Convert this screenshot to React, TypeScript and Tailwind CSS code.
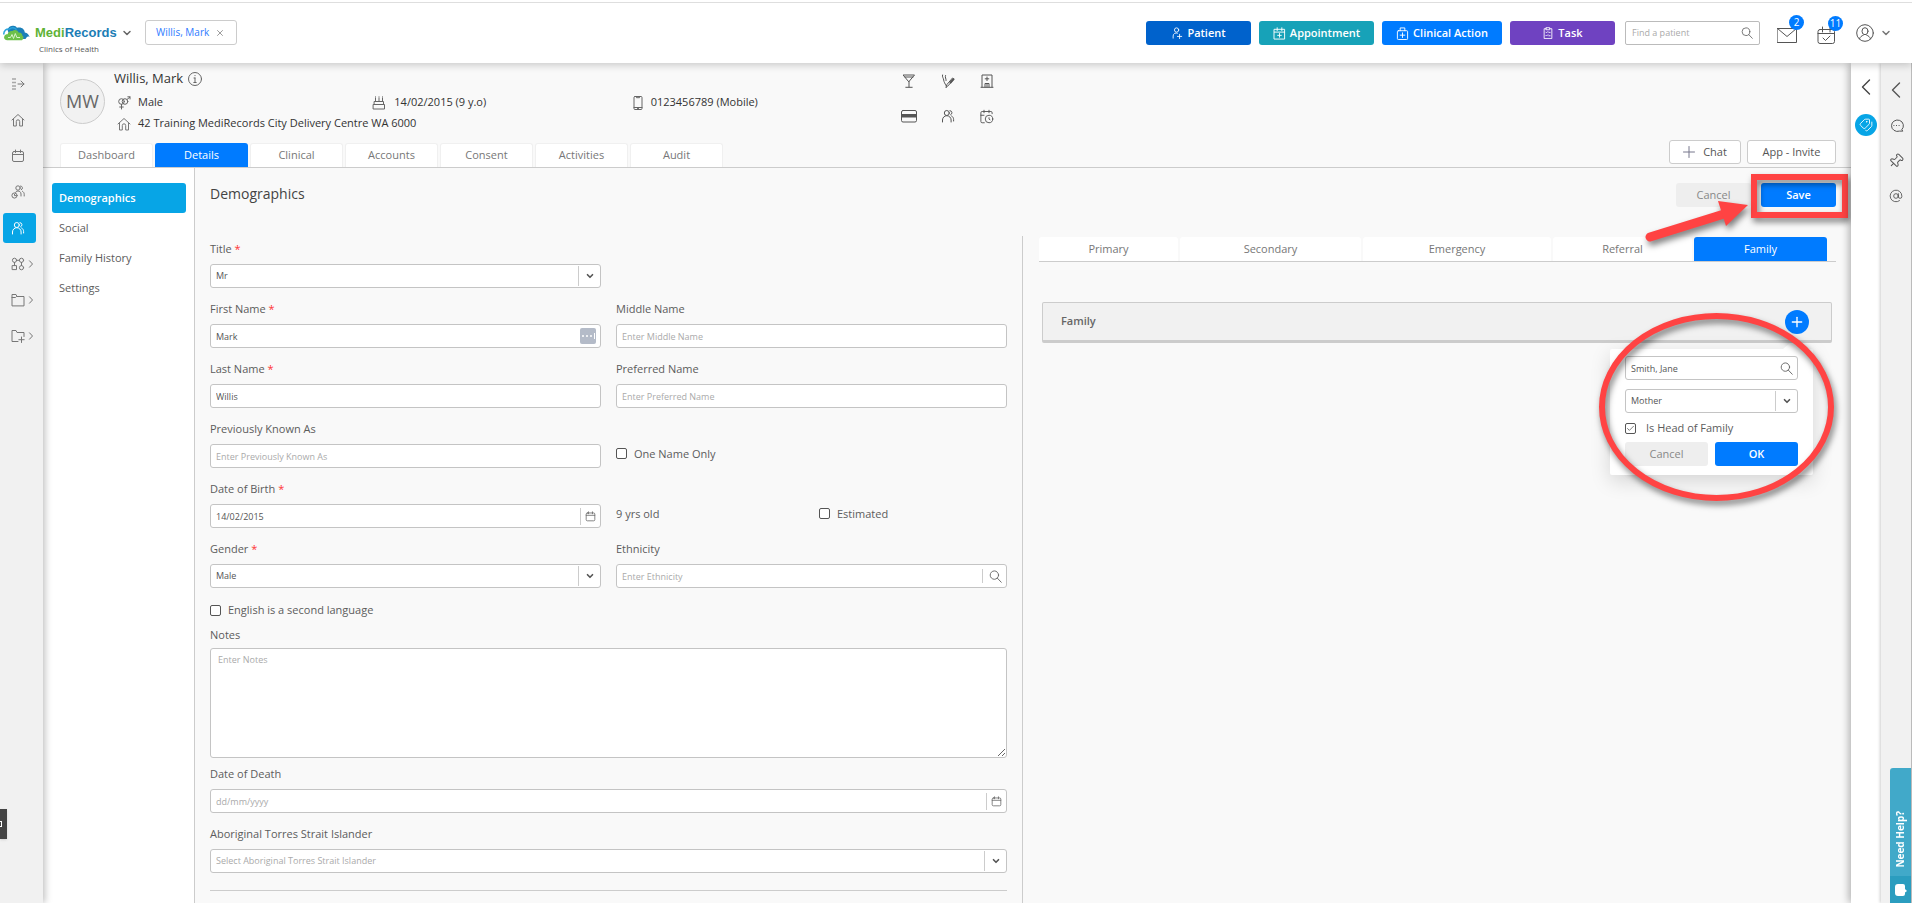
import React from "react";
import { AtSign, CalendarClock, ChevronDown, Check, Pin, Plus, Tags, X } from "lucide-react";

const Icon = ({ size = 14, box = 14, className = "", sw = 1, children }: any) => (
  <svg
    width={size}
    height={size}
    viewBox={`0 0 ${box} ${box}`}
    fill="none"
    stroke="currentColor"
    strokeWidth={sw}
    strokeLinecap="round"
    strokeLinejoin="round"
    className={`shrink-0 ${className}`}
    aria-hidden="true"
  >
    {children}
  </svg>
);

const HomeIcon = (props: any) => (
  <Icon {...props}>
    <path d="M1 7 7 1.5 13 7M2.5 6v7h2.8V8.5a1.7 1.7 0 0 1 3.4 0V13h2.8V6" />
  </Icon>
);

const CalendarIcon = (props: any) => (
  <Icon {...props}>
    <rect x="1.5" y="2.5" width="11" height="10" rx="1.5" />
    <path d="M1.5 5.5h11M4.5 1v2.5M9.5 1v2.5" />
  </Icon>
);

const PeopleIcon = (props: any) => (
  <Icon {...props}>
    <circle cx="5.8" cy="4" r="2.5" />
    <path d="M1.5 13v-2a4.3 4.3 0 0 1 8.6 0v2M9 1.6a2.2 2.2 0 0 1 .6 4.2M10.6 7c1.5.8 2 2.2 2 3.6V12" />
  </Icon>
);

const SearchIcon = ({ size = 13, className = "" }: any) => (
  <Icon size={size} className={className}>
    <circle cx="5.8" cy="5.5" r="4.5" />
    <path d="m9 8.8 4.2 4.4" />
  </Icon>
);

const LeftIcon = () => (
  <Icon size={16} box={16} sw={1.4}>
    <path d="M11.5 1 4.500 8l7 7" />
  </Icon>
);

const RightIcon = () => (
  <Icon size={8} box={8} className="ml-[2px]">
    <path d="m2.5.8 3 3.200-3 3.200" />
  </Icon>
);

const GenderIcon = () => (
  <Icon>
    <circle cx="4.500" cy="5.500" r="2.800" />
    <circle cx="8" cy="5.500" r="2.800" />
    <path d="M4.500 8.300V13M2.700 11h3.600M10 3.500 13 1M10.800.8H13V3" />
  </Icon>
);

const CakeIcon = () => (
  <Icon>
    <path d="M3.500 2v3M7 2v3M10.500 2v3M2.500 5.500h9v3h-9zM1.500 8.500h11V13h-11zM3.500.8v.2M7 .8v.2M10.500.8v.2" />
  </Icon>
);

const PhoneIcon = () => (
  <Icon>
    <rect x="3" y=".5" width="8" height="13" rx="1" />
    <path d="M5.500.5v1.200h3V.5M3 11.500h8M6.500 12.500h1" />
  </Icon>
);

const CocktailIcon = () => (
  <Icon>
    <path d="M1.500 1h11L7 7.500zM3 3h8M7 7.500V13M3.800 13.300h6.400" />
  </Icon>
);

const SmokeIcon = () => (
  <Icon>
    <path d="M1.500 1c-.6 2 1 3 1.200 5S4 9.500 5 11.500M4.500 1.500c-.8 2 .8 3 .6 5" />
    <path d="m5 13.300.8-2.600L11.500 4 13 5.200l-6 6.600z" />
    <path d="m9.500 8.500 3-3.300" strokeWidth="2" />
  </Icon>
);

const HospitalIcon = () => (
  <Icon>
    <path d="M2 13V1h10v12M1 13.300h12M7 3v3.600M5.200 4.800h3.600M5 13V9.500h4V13M7 9.500V13" />
  </Icon>
);

const CardIcon = () => (
  <Icon size={16} box={16}>
    <rect x=".5" y="2.500" width="15" height="11.500" rx="1.500" />
    <path d="M1 6h14v3.500H1z" fill="currentColor" stroke="none" />
  </Icon>
);

const ExpandIcon = () => (
  <Icon>
    <path d="M1 2h4M1 5.500h4M1 9h4M1 12h4" strokeWidth="1.500" strokeLinecap="butt" className="opacity-60" />
    <path d="M7 7h6M10 4l3 3-3 3" />
  </Icon>
);

const GroupSearchIcon = () => (
  <Icon>
    <circle cx="7" cy="3" r="2.200" />
    <path d="M4.500 8C4.500 6.800 5.500 6 7 6s3 1 3 3v2M9.500 1a2 2 0 0 1 .8 3.800M11.500 6.300c1 .6 1.700 1.500 1.700 3V11" />
    <circle cx="3.500" cy="10.500" r="2.600" />
    <path d="M3.500 9.200v1.400h1.200" />
  </Icon>
);

const NodesIcon = () => (
  <Icon>
    <circle cx="3.500" cy="3.300" r="2.100" />
    <circle cx="10.500" cy="3.300" r="2.100" />
    <rect x="1.500" y="8.600" width="4" height="4" />
    <circle cx="10.500" cy="10.700" r="2.100" />
    <path d="M5.600 3.300h2.800M3.500 5.400v3.200M10.500 5.400v3.200" />
  </Icon>
);

const FolderIcon = ({ plus }: any) => (
  <Icon>
    {plus ? (
      <path d="M7 12.500H1v-11h4l1 2h7v4M10.500 8v5.500M7.800 10.700h5.400" />
    ) : (
      <path d="M1 12.500v-11h4l1 2h7v9zM1 4.500h3.500l1-1" />
    )}
  </Icon>
);

const PatientAddIcon = () => (
  <Icon size={12}>
    <circle cx="6.500" cy="3.500" r="2.500" />
    <path d="M2.500 13v-2.500a3.500 3.500 0 0 1 5-3.300M10 8.500v5M7.500 11h5" />
  </Icon>
);

const CalendarAddIcon = () => (
  <Icon size={13}>
    <rect x="1.500" y="2.500" width="11" height="10.500" />
    <path d="M1.500 5.500h11M4.500.8v3M9.500.8v3M7 7v4M5 9h4" />
  </Icon>
);

const ClinicalIcon = () => (
  <Icon size={13}>
    <rect x="1.500" y="4" width="11" height="9.500" rx="1" />
    <path d="M4.500 4V1h5v3M7 6.300v5M4.500 8.800h5" />
  </Icon>
);

const TaskIcon = () => (
  <Icon size={12}>
    <path d="M5 2H2.500v11.500h9V2H9M5 .8h4v2.400H5zM4.500 6l.8.8 1.500-1.500M8 6.300h1.500M4.500 9.700l.8.8L6.800 9M8 10.200h1.500" />
  </Icon>
);

const CloudLogo = () => (
  <svg width="27" height="16" viewBox="0 0 27 16" className="shrink-0" aria-hidden="true">
    <path
      d="M4.500 5C5 2 8 .5 10.500.8c1.600.1 2.700.8 3.500 1.900C18.500 1.500 21.500 4 21.800 7.500c2.700.2 4 2.500 4.900 4.500-1.200-.6-2.400-.5-3 .2L22.500 14H8z"
      fill="#1b7fb8"
    />
    <path d="M.8 9.500C.5 5.500 3.500 3.500 6.500 4c2-2 5.500-1.600 7 .7" fill="none" stroke="#2aa3dc" strokeWidth="1.500" />
    <path
      d="M4 15.200c-2.500-.2-3.500-2.200-2.700-4C2 9.500 3.500 9 4.600 9.200 5 6.800 7.300 5.500 9.500 6c1.700-1.600 5-1 6 1.500 2.500-.2 4 1.500 3.900 3.200 1.600.8 1.400 3-.4 4.500z"
      fill="#6cc04a"
    />
    <path d="M5 12.500h2.500l1.500-3 1.500 4 1.800-5 1.500 4H17" fill="none" stroke="#d9f3cd" strokeWidth="1" />
  </svg>
);

const actions = [
  { label: "Patient", icon: <PatientAddIcon />, style: "w-[105px] bg-[#0062cc]" },
  { label: "Appointment", icon: <CalendarAddIcon />, style: "w-[115px] bg-[#17a2b8]" },
  { label: "Clinical Action", icon: <ClinicalIcon />, style: "w-[120px] bg-[#007bff]" },
  { label: "Task", icon: <TaskIcon />, style: "w-[105px] bg-[#6f42c1]" },
];

const Badge = ({ children }: any) => (
  <span className="absolute -top-[10px] -right-[7px] flex size-[15px] items-center justify-center rounded-full bg-[#007bff] text-[10px] text-white">
    {children}
  </span>
);

const Header = () => (
  <header className="relative z-20 bg-white pt-[2px] shadow-[0_2px_8px_rgba(0,0,0,0.2)]">
    <div className="flex h-[61px] items-start border-t border-[#dedede] pt-[18px]">
      <div className="pl-[3px] pt-[2px]">
        <div className="flex h-5 items-center">
          <CloudLogo />
          <span className="ml-[5px] font-['Liberation_Sans',sans-serif] text-[13px] font-bold text-[#1b7db5]">
            <span className="text-[#5fb336]">Medi</span>Records
          </span>
          <button aria-label="Switch practice" className="ml-1">
            <ChevronDown size={12} strokeWidth={3} className="text-[#666]" />
          </button>
        </div>
        <div className="pl-9 text-[8px] leading-3 text-[#555]">Clinics of Health</div>
      </div>
      <button className="-mt-px ml-3 flex h-[25px] w-[92px] items-center justify-center gap-[6px] rounded-[3px] border border-[#ccc] bg-white text-[10px] text-[#2f7bff]">
        Willis, Mark
        <X size={10} strokeWidth={2} className="text-[#888]" />
      </button>
      <div className="ml-auto flex gap-2">
        {actions.map((a) => (
          <button
            key={a.label}
            className={`flex h-6 items-center justify-center gap-1 rounded-[3px] text-[11px] font-semibold text-white ${a.style}`}
          >
            {a.icon}
            {a.label}
          </button>
        ))}
      </div>
      <label className="ml-[10px] flex h-6 w-[135px] items-center rounded-[2px] border border-[#bbb] px-[6px]">
        <input
          aria-label="Find a patient"
          placeholder="Find a patient"
          className="min-w-0 flex-1 text-[9px] outline-none placeholder:text-[#aaa]"
        />
        <SearchIcon size={12} className="text-[#666]" />
      </label>
      <div className="flex h-6 items-center pr-5 pl-[17px] text-[#555]">
        <button aria-label="Messages" className="relative mt-1">
          <Icon size={20} box={20}>
            <path d="M.5 3.500h19v14H.5zM.5 3.500l9.500 8 9.500-8" />
          </Icon>
          <Badge>2</Badge>
        </button>
        <button aria-label="Tasks" className="relative mt-1 ml-5">
          <Icon size={19} box={19}>
            <rect x="1" y="3.500" width="16.500" height="14" rx="2" />
            <path d="M1 7.500h16.500M5.500 1v5M13 1v5M6 12l2.500 2.500L13 10" />
          </Icon>
          <Badge>11</Badge>
        </button>
        <button aria-label="Account" className="ml-5 flex items-center gap-[6px]">
          <Icon size={18} box={18}>
            <circle cx="9" cy="9" r="8.300" />
            <ellipse cx="9" cy="7.200" rx="3" ry="3.500" />
            <path d="M3.500 14.800c.5-2 2.200-3 3.800-3.600M14.500 14.800c-.5-2-2.200-3-3.800-3.600" />
          </Icon>
          <ChevronDown size={12} strokeWidth={3} className="text-[#777]" />
        </button>
      </div>
    </div>
  </header>
);

const sideItems = [
  { name: "Expand menu", icon: <ExpandIcon /> },
  { name: "Home", icon: <HomeIcon /> },
  { name: "Calendar", icon: <CalendarIcon /> },
  { name: "Waiting room", icon: <GroupSearchIcon /> },
  { name: "Patients", icon: <PeopleIcon />, active: true },
  { name: "Modules", icon: <NodesIcon />, more: true },
  { name: "Files", icon: <FolderIcon />, more: true },
  { name: "Resources", icon: <FolderIcon plus />, more: true },
];

const Sidebar = () => (
  <aside className="relative z-10 w-[43px] shrink-0 bg-[#f1f1f1] pt-[3px] text-[#777] shadow-[2px_0_7px_rgba(0,0,0,0.25)]">
    {sideItems.map((s: any) => (
      <div key={s.name} className="flex h-9 items-center pl-[3px]">
        <button
          aria-label={s.name}
          className={`flex h-[30px] w-[33px] items-center rounded-[3px] pl-2 ${
            s.active ? "bg-[#07a5e6] text-white" : ""
          }`}
        >
          {s.icon}
          {s.more && <RightIcon />}
        </button>
      </div>
    ))}
    <div className="absolute top-[746px] left-0 flex h-[30px] w-[7px] items-center overflow-hidden bg-[#444] shadow">
      <span className="-ml-1 size-[6px] shrink-0 border border-white" />
    </div>
  </aside>
);

const tabs = ["Dashboard", "Details", "Clinical", "Accounts", "Consent", "Activities", "Audit"];

const PatientBanner = () => (
  <div className="border-b border-[#ccc] pr-[15px] pl-[17px]">
    <div className="flex pt-[6px]">
      <div className="mt-[10px] flex size-[45px] shrink-0 items-center justify-center rounded-full border border-[#ccc] bg-[#f1f1f1] text-[18px] text-[#666]">
        MW
      </div>
      <div className="ml-[9px] w-[775px] text-[11px] text-[#333]">
        <div className="mb-[3px] flex h-5 items-center gap-[5px] text-[13px]">
          Willis, Mark
          <Icon className="text-[#666]">
            <circle cx="7" cy="7" r="6.500" />
            <path d="M7 6v4.500M7 3.500v.2M6 6h1M5.800 10.500h2.400" />
          </Icon>
        </div>
        <div className="grid h-[21px] grid-cols-3 items-center">
          <span className="flex items-center gap-[7px] pl-[3px]">
            <span className="text-[#666]"><GenderIcon /></span>Male
          </span>
          <span className="flex items-center gap-2">
            <span className="text-[#666]"><CakeIcon /></span>14/02/2015 (9 y.o)
          </span>
          <span className="flex items-center gap-[6px]">
            <span className="text-[#666]"><PhoneIcon /></span>0123456789 (Mobile)
          </span>
        </div>
        <div className="flex h-[21px] items-center gap-[7px] pl-[3px]">
          <span className="text-[#777]"><HomeIcon /></span>42 Training MediRecords City Delivery Centre WA 6000
        </div>
      </div>
      <div className="mt-[5px] grid h-[50px] grid-cols-[39px_39px_39px] content-between items-center justify-items-center text-[#555]">
        <CocktailIcon />
        <SmokeIcon />
        <HospitalIcon />
        <CardIcon />
        <PeopleIcon />
        <CalendarClock size={15} strokeWidth={1.5} />
      </div>
    </div>
    <div className="mt-[6px] flex items-end justify-between">
      <nav className="flex gap-[2px] text-[11px]">
        {tabs.map((t) => (
          <a
            key={t}
            href="#"
            className={`flex h-6 w-[93px] items-center justify-center rounded-t-[3px] ${
              t === "Details" ? "bg-[#007bff] text-white" : "border border-b-0 border-[#f0f0f0] bg-white text-[#777]"
            }`}
          >
            {t}
          </a>
        ))}
      </nav>
      <div className="mb-[3px] flex gap-[6px] text-[11px] text-[#555]">
        <button className="flex h-6 w-[72px] items-center justify-center gap-2 rounded-[3px] border border-[#ccc] bg-white">
          <Icon size={12} box={12} className="text-[#77778c]">
            <path d="M6 .5v11M.5 6h11" />
          </Icon>
          Chat
        </button>
        <button className="h-6 w-[89px] rounded-[3px] border border-[#ccc] bg-white">App - Invite</button>
      </div>
    </div>
  </div>
);

const Label = ({ id, required, children }: any) => (
  <label htmlFor={id} className="block h-[18px] text-[11px] leading-[18px] text-[#5c5c5c]">
    {children}
    {required && <span className="text-[#f33]"> *</span>}
  </label>
);

const box =
  "block h-6 w-full rounded-[3px] border border-[#c4c4c4] bg-white px-[5px] text-[9px] outline-none placeholder:text-[#aaa]";

const Field = ({ id, label, required, value, placeholder, end }: any) => (
  <div>
    <Label id={id} required={required}>{label}</Label>
    <div className="relative mt-[6px]">
      <input id={id} defaultValue={value} placeholder={placeholder} className={`${box} text-[#555]`} />
      {end && (
        <span className="pointer-events-none absolute inset-y-0 right-[5px] flex items-center text-[#666]">{end}</span>
      )}
    </div>
  </div>
);

const SelectBox = ({ id, value, name, muted }: any) => (
  <div className="relative">
    <select id={id} aria-label={name} className={`${box} appearance-none ${muted ? "text-[#aaa]" : "text-[#555]"}`}>
      <option>{value}</option>
    </select>
    <span className="pointer-events-none absolute top-[2px] right-px flex h-5 w-[22px] items-center justify-center border-l border-[#ccc] text-[#555]">
      <ChevronDown size={10} strokeWidth={4} />
    </span>
  </div>
);

const SelectField = ({ id, label, required, value, muted }: any) => (
  <div>
    <Label id={id} required={required}>{label}</Label>
    <div className="mt-[6px]">
      <SelectBox id={id} value={value} muted={muted} />
    </div>
  </div>
);

const CheckField = ({ label, checked, wide }: any) => (
  <label className={`flex items-center text-[11px] text-[#5c5c5c] ${wide ? "gap-[10px]" : "gap-[7px]"}`}>
    <span className="relative flex">
      <input
        type="checkbox"
        defaultChecked={checked}
        className="size-[11px] appearance-none rounded-[2px] border border-[#555] bg-white"
      />
      {checked && <Check size={9} strokeWidth={2} className="absolute top-px left-px text-[#555]" />}
    </span>
    {label}
  </label>
);

const DateEnd = () => (
  <span className="flex h-[17px] items-center border-l border-[#ccc] pl-1">
    <CalendarIcon size={11} />
  </span>
);

const DetailsForm = () => (
  <form className="w-1/2 border-r border-[#ccc] px-[15px] pt-1 pb-3">
    <div className="grid grid-cols-2 gap-x-[15px] gap-y-3">
      <SelectField id="title" label="Title" required value="Mr" />
      <div />
      <Field
        id="first"
        label="First Name"
        required
        value="Mark"
        end={
          <span className="flex size-4 items-center justify-center gap-[2px] rounded-[2px] bg-[#b4bbc8]">
            <i className="size-[2px] rounded-full bg-white" />
            <i className="size-[2px] rounded-full bg-white" />
            <i className="size-[2px] rounded-full bg-white" />
            <i className="h-[6px] w-px bg-white" />
          </span>
        }
      />
      <Field id="middle" label="Middle Name" placeholder="Enter Middle Name" />
      <Field id="last" label="Last Name" required value="Willis" />
      <Field id="preferred" label="Preferred Name" placeholder="Enter Preferred Name" />
      <Field id="previous" label="Previously Known As" placeholder="Enter Previously Known As" />
      <div className="flex items-end pb-[6px]">
        <CheckField label="One Name Only" />
      </div>
      <Field id="dob" label="Date of Birth" required value="14/02/2015" end={<DateEnd />} />
      <div className="grid grid-cols-2 items-end gap-x-[15px] pb-[6px] text-[11px] text-[#5c5c5c]">
        <span>9 yrs old</span>
        <CheckField label="Estimated" />
      </div>
      <SelectField id="gender" label="Gender" required value="Male" />
      <Field
        id="ethnicity"
        label="Ethnicity"
        placeholder="Enter Ethnicity"
        end={
          <span className="flex h-[14px] items-center border-l border-[#ccc] pl-[6px]">
            <SearchIcon />
          </span>
        }
      />
    </div>
    <div className="mt-3 flex h-5 items-center">
      <CheckField label="English is a second language" />
    </div>
    <div className="mt-[6px]">
      <Label id="notes">Notes</Label>
      <textarea
        id="notes"
        placeholder="Enter Notes"
        className="mt-1 block h-[110px] w-full rounded-[3px] border border-[#c4c4c4] bg-white px-[7px] py-1 text-[9px] text-[#555] outline-none placeholder:text-[#aaa]"
      />
    </div>
    <div className="mt-[7px] flex flex-col gap-3">
      <Field id="death" label="Date of Death" placeholder="dd/mm/yyyy" end={<DateEnd />} />
      <SelectField
        id="atsi"
        label="Aboriginal Torres Strait Islander"
        value="Select Aboriginal Torres Strait Islander"
        muted
      />
    </div>
    <hr className="mt-[17px] border-[#ccc]" />
  </form>
);

const contactTabs = [
  { name: "Primary", grow: "flex-[139]" },
  { name: "Secondary", grow: "flex-[181]" },
  { name: "Emergency", grow: "flex-[188]" },
  { name: "Referral", grow: "flex-[139]" },
  { name: "Family", grow: "flex-[133]" },
];

const FamilyPopup = () => (
  <div className="absolute top-[46px] right-[18px] w-[203px] rounded-[2px] bg-white px-[15px] pt-[7px] pb-[9px] shadow-[0_6px_20px_rgba(0,0,0,0.15)]">
    <svg width="24" height="6" viewBox="0 0 24 6" className="absolute -top-[6px] right-[6px]" aria-hidden="true">
      <path d="M0 6 7 0h10l7 6z" fill="#fff" />
    </svg>
    <div className="relative">
      <input aria-label="Family member" defaultValue="Smith, Jane" className={`${box} text-[#555]`} />
      <SearchIcon className="pointer-events-none absolute top-[6px] right-[5px] text-[#666]" />
    </div>
    <div className="mt-[9px]">
      <SelectBox name="Relationship" value="Mother" />
    </div>
    <div className="mt-[6px] flex h-[18px] items-center">
      <CheckField label="Is Head of Family" checked wide />
    </div>
    <div className="mt-[5px] flex gap-[7px] text-[11px]">
      <button className="h-6 flex-1 rounded-[3px] bg-[#eee] text-[#888]">Cancel</button>
      <button className="h-6 flex-1 rounded-[3px] bg-[#007bff] font-semibold text-white">OK</button>
    </div>
    <svg
      width="255"
      height="210"
      viewBox="0 0 255 210"
      className="pointer-events-none absolute -top-[46px] -left-[21px] max-w-none drop-shadow-[2px_4px_3px_rgba(0,0,0,0.5)]"
      aria-hidden="true"
    >
      <ellipse cx="127.5" cy="104" rx="114.5" ry="91" fill="none" stroke="#ff4343" strokeWidth="6" />
    </svg>
  </div>
);

const Contacts = () => (
  <section className="w-1/2 pt-px pr-[15px] pl-4">
    <nav className="flex gap-[2px] border-b border-[#ccc] pr-[9px] text-[11px]">
      {contactTabs.map((t) => (
        <a
          key={t.name}
          href="#"
          className={`flex h-6 items-center justify-center rounded-t-[3px] ${t.grow} ${
            t.name === "Family" ? "bg-[#007bff] text-white" : "bg-white text-[#777]"
          }`}
        >
          {t.name}
        </a>
      ))}
    </nav>
    <div className="relative mt-10 mr-1 ml-[3px] flex h-[41px] items-center justify-between rounded-[2px] border border-b-[3px] border-[#ccc] bg-[#f1f1f1] pr-[22px] pl-[18px]">
      <h2 className="text-[11px] font-semibold text-[#666]">Family</h2>
      <button
        aria-label="Add family member"
        className="flex size-6 items-center justify-center rounded-full bg-[#007bff] text-white"
      >
        <Plus size={16} strokeWidth={2} />
      </button>
      <FamilyPopup />
    </div>
  </section>
);

const sections = ["Demographics", "Social", "Family History", "Settings"];

const RightRails = () => (
  <>
    <aside className="relative z-10 flex w-[30px] shrink-0 flex-col items-center bg-white pt-4 text-[#444] shadow-[-2px_0_8px_rgba(0,0,0,0.3)]">
      <button aria-label="Open summary">
        <LeftIcon />
      </button>
      <button
        aria-label="Tags"
        className="mt-[19px] flex size-[22px] items-center justify-center rounded-full bg-[#07a5e6] text-white"
      >
        <Tags size={14} strokeWidth={1.5} className="-scale-x-100" />
      </button>
    </aside>
    <aside className="relative z-10 flex w-[31px] shrink-0 flex-col items-center gap-5 border-r border-[#bbb] bg-[#f1f1f1] pt-[19px] text-[#555] shadow-[-1px_0_3px_rgba(0,0,0,0.2)]">
      <button aria-label="Open panel">
        <LeftIcon />
      </button>
      <button aria-label="Chat">
        <Icon size={15} box={15}>
          <path d="M13 11.500a6 5.700 0 1 0-2.500 1.600h3z" />
          <path d="M4.800 7.500h.2M7.400 7.500h.2M10 7.500h.2" />
        </Icon>
      </button>
      <button aria-label="Pin"><Pin size={16} strokeWidth={1.5} className="rotate-45" /></button>
      <button aria-label="Mentions"><AtSign size={14} strokeWidth={1.5} /></button>
    </aside>
  </>
);

export default function App() {
  return (
    <div className="relative flex min-h-screen flex-col bg-[#f9f9f9] font-['Open_Sans',sans-serif]">
      <Header />
      <div className="flex flex-1">
        <Sidebar />
        <main className="flex min-w-0 flex-1 flex-col">
          <PatientBanner />
          <div className="flex flex-1">
            <nav className="w-[152px] shrink-0 border-r border-[#ccc] bg-white pt-[15px] pr-2 pl-[9px] text-[11px] text-[#5c5c5c]">
              {sections.map((s) => (
                <a
                  key={s}
                  href="#"
                  className={`flex h-[30px] items-center rounded-[3px] pl-[7px] ${
                    s === "Demographics" ? "bg-[#07a5e6] font-semibold text-white" : ""
                  }`}
                >
                  {s}
                </a>
              ))}
            </nav>
            <div className="flex min-w-0 flex-1 flex-col">
              <div className="flex items-start justify-between px-[15px] pt-[15px]">
                <h1 className="text-[14px] leading-[22px] text-[#444]">Demographics</h1>
                <div className="flex gap-[10px] text-[11px]">
                  <button className="h-6 w-[75px] rounded-[3px] bg-[#eee] text-[#888]">Cancel</button>
                  <div className="relative">
                    <button className="h-6 w-[75px] rounded-[3px] bg-[#007bff] font-semibold text-white">Save</button>
                    <div className="pointer-events-none absolute -top-[9px] -right-3 -bottom-[11px] -left-[10px] border-[6px] border-[#ff4343] drop-shadow-[2px_4px_3px_rgba(0,0,0,0.5)]" />
                    <svg
                      width="110"
                      height="50"
                      viewBox="0 0 110 50"
                      className="pointer-events-none absolute top-[14px] -left-[121px] z-10 max-w-none drop-shadow-[2px_4px_3px_rgba(0,0,0,0.5)]"
                      aria-hidden="true"
                    >
                      <path d="M10 40 84 17" stroke="#ff4343" strokeWidth="9" strokeLinecap="round" />
                      <path d="M78 4 108 8 86 29z" fill="#ff4343" />
                    </svg>
                  </div>
                </div>
              </div>
              <div className="mt-[29px] flex flex-1">
                <DetailsForm />
                <Contacts />
              </div>
            </div>
          </div>
        </main>
        <RightRails />
      </div>
      <button className="absolute right-px bottom-0 z-20 flex h-[135px] w-[21px] flex-col items-center justify-end rounded-tl-[3px] bg-[#41a9c9] text-[10px] font-bold text-white">
        <span className="mb-2 rotate-180 leading-[21px] [writing-mode:vertical-rl]">Need Help?</span>
        <span className="flex h-[27px] w-full items-center justify-center bg-[#2b9dbf]">
          <svg width="12" height="14" viewBox="0 0 12 14" fill="#fff" aria-hidden="true">
            <path d="M3 1h5a2 2 0 0 1 2 2v3l2 2-2 1.500V11a2 2 0 0 1-2 2H3a3 3 0 0 1-3-3V4a3 3 0 0 1 3-3z" />
          </svg>
        </span>
      </button>
    </div>
  );
}
